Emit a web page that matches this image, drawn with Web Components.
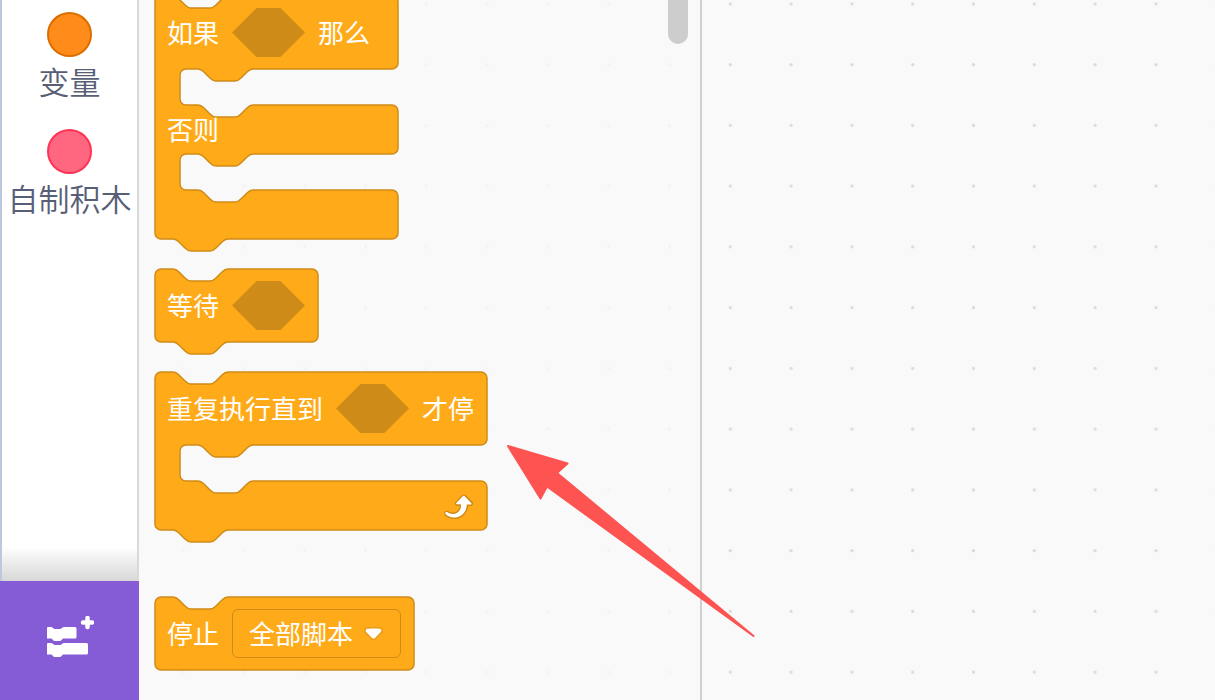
<!DOCTYPE html>
<html lang="zh-CN">
<head>
<meta charset="utf-8">
<meta name="viewport" content="width=device-width, initial-scale=1">
<title>积木</title>
<style>
    html, body { height: 100%; margin: 0; }
    body {
        overflow: hidden;
        background: #f9f9f9;
        font-family: "Noto Sans CJK SC", "Noto Sans", sans-serif;
    }
</style>
</head>
<body>
<block-editor></block-editor>

<script>
/**
 * Creates a template element from a string of markup.
 */
function createTemplate(html) {
    const template = document.createElement('template');
    template.innerHTML = html;
    return template;
}

/**
 * Base class that clones the static `template` of its subclass into an open shadow root.
 */
class TemplateElement extends HTMLElement {
    constructor() {
        super();
        this.attachShadow({ mode: 'open' });
        this.shadowRoot.appendChild(this.constructor.template.content.cloneNode(true));
    }
}

/**
 * Category entry in the sidebar: a colored dot with a label below.
 */
class BlockCategoryElement extends TemplateElement {
    static template = createTemplate(`
        <style>
            :host { display: block; }
            button {
                display: flex;
                flex-direction: column;
                align-items: center;
                gap: 2px;
                width: 100%;
                padding: 12px 0 14px;
                border: 0;
                background: none;
                color: #575e75;
                font: 350 31px/44px "Noto Sans CJK SC", sans-serif;
                white-space: nowrap;
                cursor: pointer;
            }
            .dot {
                box-sizing: border-box;
                width: 45px;
                height: 45px;
                border: 2px solid var(--category-edge);
                border-radius: 50%;
                background: var(--category-fill);
            }
        </style>
        <button type="button"><span class="dot"></span><slot></slot></button>
    `);
}
customElements.define('block-category', BlockCategoryElement);

/**
 * Empty hexagonal input for a condition.
 */
class ConditionInputElement extends TemplateElement {
    static template = createTemplate(`
        <style>
            :host { display: block; flex: none; }
            svg { display: block; }
        </style>
        <svg width="73" height="49" viewBox="0 0 73 49" aria-hidden="true">
            <path d="M24.5 0h24L73 24.5 48.5 49h-24L0 24.5z" fill="#cf8b17"/>
        </svg>
    `);
}
customElements.define('condition-input', ConditionInputElement);

/**
 * Drop-down field inside a block.
 */
class BlockDropdownElement extends TemplateElement {
    static template = createTemplate(`
        <style>
            :host { display: grid; align-items: center; }
            select, svg { grid-area: 1 / 1; }
            select {
                appearance: none;
                box-sizing: border-box;
                height: 49px;
                margin: 0;
                padding: 0 46px 2px 16px;
                border: 1px solid #cf8b17;
                border-radius: 6px;
                outline: 0;
                background: #ffab19;
                color: #fff;
                font: inherit;
            }
            svg {
                justify-self: end;
                margin-right: 18px;
                pointer-events: none;
            }
        </style>
        <select aria-label="停止">
            <option>全部脚本</option>
        </select>
        <svg width="19" height="13" viewBox="0 0 12.71 8.79" aria-hidden="true">
            <path opacity=".1" fill="#231f20" d="M12.71 2.44A2.41 2.41 0 0 1 12 4.16L8.08 8.08a2.45 2.45 0 0 1-3.45 0L.72 4.16A2.42 2.42 0 0 1 0 2.44 2.48 2.48 0 0 1 .71.71C1 .47 1.43 0 6.36 0S11.75.46 12 .71a2.44 2.44 0 0 1 .71 1.73z"/>
            <path fill="#fff" d="M6.36 7.79a1.43 1.43 0 0 1-1-.42L1.42 3.45a1.44 1.44 0 0 1 0-2c.56-.56 9.31-.56 9.87 0a1.44 1.44 0 0 1 0 2L7.37 7.37a1.43 1.43 0 0 1-1.01.42z"/>
        </svg>
    `);
}
customElements.define('block-dropdown', BlockDropdownElement);

/**
 * Arrow in the foot of a loop.
 */
class LoopArrowElement extends TemplateElement {
    static template = createTemplate(`
        <style>
            :host { display: block; margin-left: auto; }
            svg { display: block; }
        </style>
        <svg width="36" height="36" viewBox="0 0 24 24" aria-hidden="true">
            <path fill="#cf8b17" d="M23.3 11c-.3.6-.9 1-1.5 1h-1.6c-.1 1.3-.5 2.5-1.1 3.6-.9 1.7-2.3 3.2-4.1 4.1-1.7.9-3.6 1.2-5.5.9-1.8-.3-3.5-1.1-4.9-2.3-.7-.7-.7-1.9 0-2.6.6-.6 1.6-.7 2.3-.2H7c.9.6 1.9.9 2.9.9s1.9-.3 2.7-.9c1.1-.8 1.8-2.1 1.8-3.5h-1.5c-.9 0-1.7-.7-1.7-1.7 0-.4.2-.9.5-1.2l4.4-4.4c.7-.6 1.7-.6 2.4 0L23 9.2c.5.5.6 1.2.3 1.8z"/>
            <path fill="#fff" d="M21.8 11h-2.6c0 1.5-.3 2.9-1 4.2-.8 1.6-2.1 2.8-3.7 3.6-1.5.8-3.3 1.1-4.9.8-1.6-.2-3.2-1-4.4-2.1-.4-.3-.4-.9-.1-1.2.3-.4.9-.4 1.2-.1 1 .7 2.2 1.1 3.4 1.1s2.3-.3 3.3-1c.9-.6 1.6-1.5 2-2.6.3-.9.4-1.8.2-2.8h-2.4c-.4 0-.7-.3-.7-.7 0-.2.1-.3.2-.4l4.4-4.4c.3-.3.7-.3.9 0L22 9.8c.3.3.4.6.3.9s-.3.3-.5.3z"/>
        </svg>
    `);
}
customElements.define('loop-arrow', LoopArrowElement);

const NOTCH_START = 18;
const MOUTH_LEFT = 25;
const NOTCH_RIGHT = 'c3,0 4.5,1.5 6,3 l6,6 c1.5,1.5 3,3 6,3 h19 c3,0 4.5,-1.5 6,-3 l6,-6 c1.5,-1.5 3,-3 6,-3';
const NOTCH_LEFT = 'c-3,0 -4.5,1.5 -6,3 l-6,6 c-1.5,1.5 -3,3 -6,3 h-19 c-3,0 -4.5,-1.5 -6,-3 l-6,-6 c-1.5,-1.5 -3,-3 -6,-3';

/**
 * Block with one to three rows. The rows are the `block-row` children, and a
 * mouth for nested blocks opens between each pair of them. The outline is drawn
 * behind the rows, from their measured positions.
 *
 * Attributes: `cap` leaves out the connector at the bottom.
 */
class CodeBlockElement extends TemplateElement {
    static template = createTemplate(`
        <style>
            :host {
                display: grid;
                position: relative;
                width: max-content;
                row-gap: 36px;
                color: #fff;
                font-size: 26px;
                line-height: 36px;
                white-space: nowrap;
            }
            svg {
                position: absolute;
                inset: 0;
                width: 100%;
                height: 100%;
                overflow: visible;
            }
            path { fill: #ffab19; stroke: #cf8b17; stroke-width: 1.5; }
        </style>
        <svg aria-hidden="true"><path/></svg>
        <slot></slot>
    `);

    constructor() {
        super();
        this._pathEl = this.shadowRoot.querySelector('path');
        this._observer = new ResizeObserver(() => this._draw());
    }

    connectedCallback() {
        this._observer.observe(this);
        this._draw();
    }

    disconnectedCallback() {
        this._observer.disconnect();
    }

    _draw() {
        const width = this.offsetWidth;
        const rows = [...this.children].map((row) => ({
            top: row.offsetTop,
            bottom: row.offsetTop + row.offsetHeight,
        }));
        if (!rows.length) {
            return;
        }

        let d = `M0,6 a6,6 0 0 1 6,-6 H${NOTCH_START} ${NOTCH_RIGHT} H${width - 6} a6,6 0 0 1 6,6`;
        rows.forEach(({ bottom }, i) => {
            d += ` V${bottom - 6} a6,6 0 0 1 -6,6`;
            const next = rows[i + 1];
            if (next) {
                d += ` H${MOUTH_LEFT + NOTCH_START + 55} ${NOTCH_LEFT} H${MOUTH_LEFT + 6} a6,6 0 0 0 -6,6`;
                d += ` V${next.top - 6} a6,6 0 0 0 6,6 H${MOUTH_LEFT + NOTCH_START} ${NOTCH_RIGHT}`;
                d += ` H${width - 6} a6,6 0 0 1 6,6`;
            }
        });
        if (!this.hasAttribute('cap')) {
            d += ` H${NOTCH_START + 55} ${NOTCH_LEFT}`;
        }
        d += ' H6 a6,6 0 0 1 -6,-6 z';
        this._pathEl.setAttribute('d', d);
    }
}

/**
 * One row of a block. `slim` is used for the rows after a mouth.
 */
class BlockRowElement extends TemplateElement {
    static template = createTemplate(`
        <style>
            :host {
                display: flex;
                position: relative;
                box-sizing: border-box;
                align-items: center;
                gap: 13px;
                height: 73px;
                padding: 0 13px 0 12px;
            }
            :host([slim]) { height: 49px; }
            ::slotted(span) { padding-bottom: 2px; }
        </style>
        <slot></slot>
    `);
}
customElements.define('block-row', BlockRowElement);
customElements.define('code-block', CodeBlockElement);

/**
 * Sidebar with the categories and the button that adds an extension.
 */
class BlockSidebarElement extends TemplateElement {
    static template = createTemplate(`
        <style>
            :host { display: flex; flex-direction: column; }
            nav {
                position: relative;
                flex: 1;
                min-height: 0;
                overflow: hidden;
                border-left: 2px solid #bdc8da;
                border-right: 2px solid #d9d9d9;
                background: #fff;
            }
            nav::after {
                content: "";
                position: absolute;
                inset: auto 0 0;
                height: 34px;
                background: linear-gradient(rgba(215, 215, 215, 0), #d7d7d7);
            }
            .add {
                display: grid;
                place-items: center;
                height: 119px;
                padding: 0 0 6px;
                border: 0;
                background: #855cd6;
                cursor: pointer;
            }
        </style>
        <nav><slot></slot></nav>
        <button class="add" type="button" aria-label="添加扩展">
            <svg width="48" height="44" viewBox="0 0 48 44" fill="#fff" aria-hidden="true">
                <path d="M2 11h3q1 0 2 1t2 1h5q1 0 2-1t2-1h11q1.5 0 1.5 1.5v8.500q0 1.5-1.5 1.5H17l-2 2q-.5.5-1.500.5H9q-1 0-1.500-.5L5.500 22.500H1V12q0-1 1-1z"/>
                <path d="M2 27h3q1 0 2 1t2 1h5q1 0 2-1t2-1h22.500q1.5 0 1.5 1.5v8.500q0 1.5-1.5 1.5H17l-2 2q-.5.5-1.500.5H9q-1 0-1.500-.5L5.500 38.500H1V28q0-1 1-1z"/>
                <path d="M41.5 2v9M37 6.5h9" fill="none" stroke="#fff" stroke-width="4.5" stroke-linecap="round"/>
            </svg>
        </button>
    `);
}
customElements.define('block-sidebar', BlockSidebarElement);

/**
 * Palette from which blocks are dragged. It lets the grid shine through.
 */
class BlockPaletteElement extends TemplateElement {
    static template = createTemplate(`
        <style>
            :host {
                display: block;
                position: relative;
                overflow: hidden;
                border-right: 2px solid #d0d0d0;
                background: rgba(249, 249, 249, 0.8);
            }
            .blocks {
                display: flex;
                flex-direction: column;
                gap: 30px;
                margin-top: -4px;
                padding-left: 16px;
            }
            .thumb {
                position: absolute;
                top: 0;
                right: 12px;
                width: 20px;
                height: 44px;
                border-radius: 0 0 10px 10px;
                background: #cecdce;
            }
        </style>
        <div class="blocks"><slot></slot></div>
        <div class="thumb"></div>
    `);
}
customElements.define('block-palette', BlockPaletteElement);

/**
 * The whole editor: sidebar, palette and workspace on a dotted grid.
 */
class BlockEditorElement extends TemplateElement {
    static template = createTemplate(`
        <style>
            :host {
                display: grid;
                grid-template-columns: 139px 563px 1fr;
                position: relative;
                height: 100vh;
                overflow: hidden;
            }
            .grid {
                position: absolute;
                inset: 0;
                width: 100%;
                height: 100%;
            }
            .pointer {
                position: absolute;
                top: 440px;
                left: 500px;
                pointer-events: none;
            }
            block-sidebar, block-palette { position: relative; min-height: 0; }
            .variables { --category-fill: #ff8c1a; --category-edge: #db6e00; }
            .custom { --category-fill: #ff6680; --category-edge: #ff3355; }
            .wide { min-width: 243px; }
            .last { margin-top: 37px; }
        </style>
        <svg class="grid" aria-hidden="true">
            <pattern id="dots" x="152.7" y="-26.6" width="60.8" height="60.75" patternUnits="userSpaceOnUse">
                <circle cx="30.4" cy="30.4" r="1.6" fill="#d9d9d9"/>
            </pattern>
            <rect width="100%" height="100%" fill="url(#dots)"/>
        </svg>
        <block-sidebar>
            <block-category class="variables">变量</block-category>
            <block-category class="custom">自制积木</block-category>
        </block-sidebar>
        <block-palette>
            <code-block class="wide">
                <block-row><span>如果</span><condition-input></condition-input><span>那么</span></block-row>
                <block-row slim><span>否则</span></block-row>
                <block-row slim></block-row>
            </code-block>
            <code-block>
                <block-row><span>等待</span><condition-input></condition-input></block-row>
            </code-block>
            <code-block>
                <block-row><span>重复执行直到</span><condition-input></condition-input><span>才停</span></block-row>
                <block-row slim><loop-arrow></loop-arrow></block-row>
            </code-block>
            <code-block class="last" cap>
                <block-row><span>停止</span><block-dropdown></block-dropdown></block-row>
            </code-block>
        </block-palette>
        <svg class="pointer" width="260" height="200" viewBox="0 0 260 200" aria-hidden="true">
            <path d="M8 6l59.5 17.5L57 33l196.5 163L47 46.5l-6.5 12z" fill="#fd5351" stroke="#fd5351" stroke-width="2" stroke-linejoin="round"/>
        </svg>
    `);
}
customElements.define('block-editor', BlockEditorElement);
</script>
</body>
</html>
